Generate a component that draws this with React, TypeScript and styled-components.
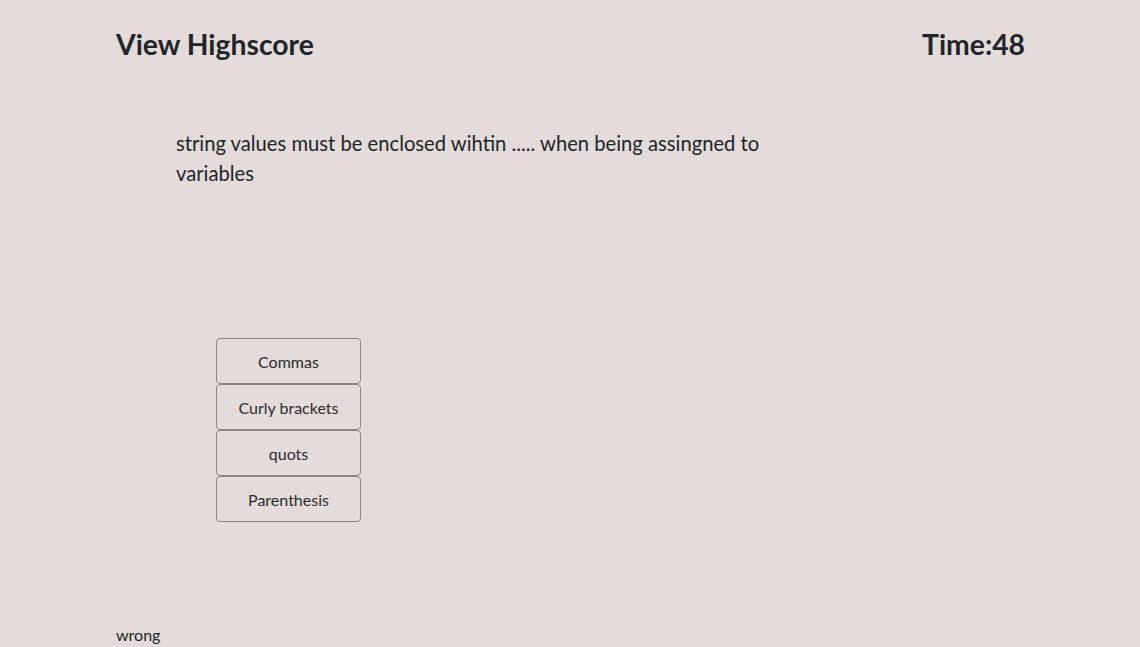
import React from "react";
import styled, { createGlobalStyle } from "styled-components";

const GlobalStyle = createGlobalStyle`
  html, body {
    margin: 0;
    padding: 0;
    background-color: #e5dbdb;
  }
  body {
    font-family: Lato, "Noto Sans", "Liberation Sans", sans-serif;
    color: #212529;
  }
`;

const Page = styled.div`
  height: 647px;
  overflow: hidden;
  display: flex;
  flex-direction: column;
  padding: 0 115px 0 116px;
  box-sizing: border-box;
  background-color: #e5dbdb;
`;

const Header = styled.header`
  display: flex;
  justify-content: space-between;
  align-items: center;
  height: 34px;
  margin-top: 27px;
`;

const HeaderTitle = styled.h1`
  margin: 0;
  font-size: 28.3px;
  font-weight: 700;
  line-height: 34px;
`;

const Question = styled.p`
  margin: 67px 0 0 60px;
  max-width: 600px;
  font-size: 20.2px;
  line-height: 30px;
`;

const Choices = styled.div`
  display: flex;
  flex-direction: column;
  margin: 150px 0 0 100px;
  width: 145px;
`;

const Choice = styled.button`
  height: 46px;
  width: 145px;
  padding: 0;
  background-color: transparent;
  border: 1px solid #8a8484;
  border-radius: 4px;
  font-family: inherit;
  font-size: 16px;
  color: #2b2b2b;
  cursor: pointer;
`;

const Feedback = styled.div`
  margin-top: auto;
  padding-bottom: 2px;
  font-size: 16px;
  line-height: 20px;
`;

const answers = ["Commas", "Curly brackets", "quots", "Parenthesis"];

const App = () => {
  return (
    <>
      <GlobalStyle />
      <Page>
        <Header>
          <HeaderTitle>View Highscore</HeaderTitle>
          <HeaderTitle>Time:48</HeaderTitle>
        </Header>
        <Question>
          string values must be enclosed wihtin ..... when being assingned to variables
        </Question>
        <Choices>
          {answers.map((answer) => (
            <Choice key={answer}>{answer}</Choice>
          ))}
        </Choices>
        <Feedback>wrong</Feedback>
      </Page>
    </>
  );
};

export default App;
